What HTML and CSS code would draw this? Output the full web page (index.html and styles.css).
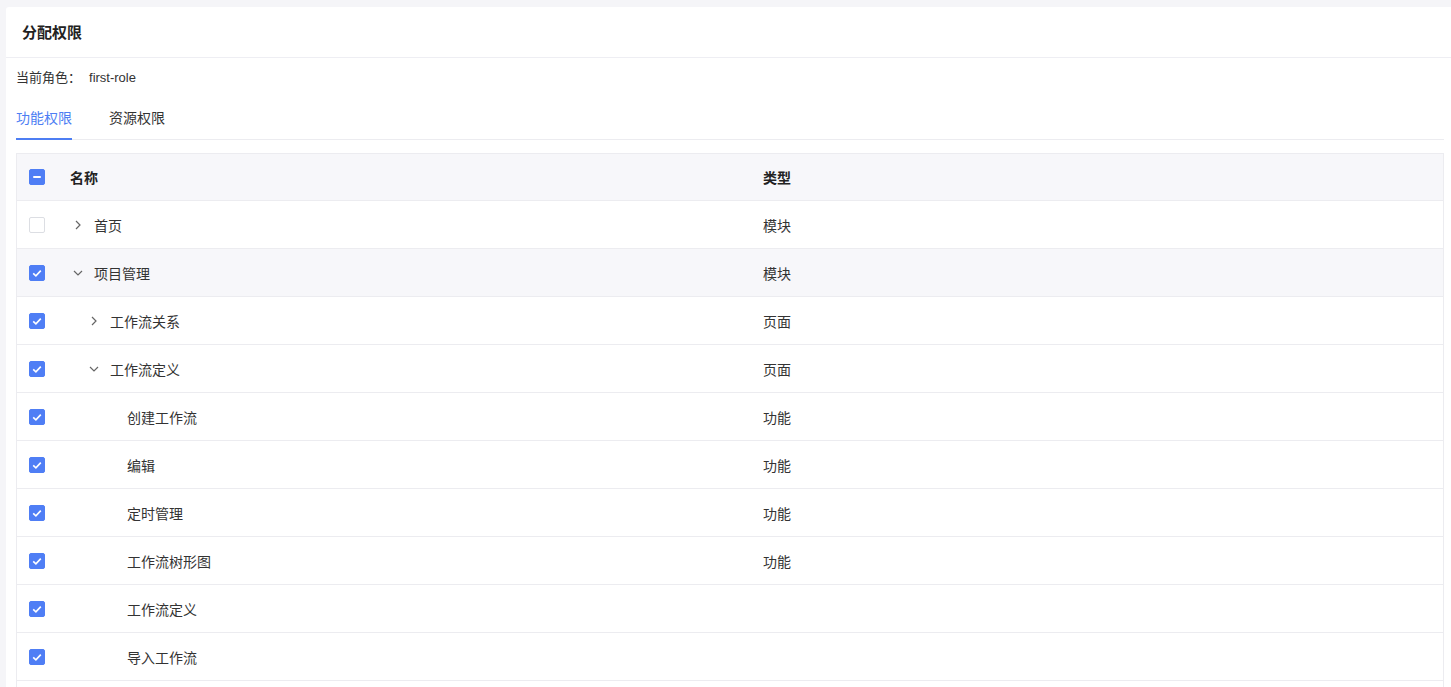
FILE: index.html
```html
<!DOCTYPE html>
<html lang="zh">
<head>
<meta charset="utf-8">
<title>分配权限</title>
<link rel="stylesheet" href="styles.css">
</head>
<body>
<div class="page">
  <div class="card">
    <div class="card-header">分配权限</div>
    <div class="card-body">
      <div class="role-line">当前角色：<span class="role-name">first-role</span></div>
      <div class="tabs">
        <div class="tab active">功能权限</div>
        <div class="tab">资源权限</div>
      </div>
      <div class="table">
        <div class="row head">
          <div class="cell-check"><span class="cb indeterminate"></span></div>
          <div class="cell-name">名称</div>
          <div class="cell-type">类型</div>
        </div>
        <div class="row">
          <div class="cell-check"><span class="cb"></span></div>
          <div class="cell-name lvl0"><span class="toggle"><svg viewBox="0 0 14 14" width="14" height="14"><path d="M5 3 L9 7 L5 11" fill="none" stroke="#666" stroke-width="1.2"/></svg></span>首页</div>
          <div class="cell-type">模块</div>
        </div>
        <div class="row hover">
          <div class="cell-check"><span class="cb checked"><svg viewBox="0 0 16 16" width="16" height="16"><path d="M4.2 8.3 L6.9 10.8 L11.8 5.6" fill="none" stroke="#fff" stroke-width="1.6"/></svg></span></div>
          <div class="cell-name lvl0"><span class="toggle"><svg viewBox="0 0 14 14" width="14" height="14"><path d="M3 5 L7 9 L11 5" fill="none" stroke="#666" stroke-width="1.2"/></svg></span>项目管理</div>
          <div class="cell-type">模块</div>
        </div>
        <div class="row">
          <div class="cell-check"><span class="cb checked"><svg viewBox="0 0 16 16" width="16" height="16"><path d="M4.2 8.3 L6.9 10.8 L11.8 5.6" fill="none" stroke="#fff" stroke-width="1.6"/></svg></span></div>
          <div class="cell-name lvl1"><span class="toggle"><svg viewBox="0 0 14 14" width="14" height="14"><path d="M5 3 L9 7 L5 11" fill="none" stroke="#666" stroke-width="1.2"/></svg></span>工作流关系</div>
          <div class="cell-type">页面</div>
        </div>
        <div class="row">
          <div class="cell-check"><span class="cb checked"><svg viewBox="0 0 16 16" width="16" height="16"><path d="M4.2 8.3 L6.9 10.8 L11.8 5.6" fill="none" stroke="#fff" stroke-width="1.6"/></svg></span></div>
          <div class="cell-name lvl1"><span class="toggle"><svg viewBox="0 0 14 14" width="14" height="14"><path d="M3 5 L7 9 L11 5" fill="none" stroke="#666" stroke-width="1.2"/></svg></span>工作流定义</div>
          <div class="cell-type">页面</div>
        </div>
        <div class="row">
          <div class="cell-check"><span class="cb checked"><svg viewBox="0 0 16 16" width="16" height="16"><path d="M4.2 8.3 L6.9 10.8 L11.8 5.6" fill="none" stroke="#fff" stroke-width="1.6"/></svg></span></div>
          <div class="cell-name lvl2"><span class="toggle"></span>创建工作流</div>
          <div class="cell-type">功能</div>
        </div>
        <div class="row">
          <div class="cell-check"><span class="cb checked"><svg viewBox="0 0 16 16" width="16" height="16"><path d="M4.2 8.3 L6.9 10.8 L11.8 5.6" fill="none" stroke="#fff" stroke-width="1.6"/></svg></span></div>
          <div class="cell-name lvl2"><span class="toggle"></span>编辑</div>
          <div class="cell-type">功能</div>
        </div>
        <div class="row">
          <div class="cell-check"><span class="cb checked"><svg viewBox="0 0 16 16" width="16" height="16"><path d="M4.2 8.3 L6.9 10.8 L11.8 5.6" fill="none" stroke="#fff" stroke-width="1.6"/></svg></span></div>
          <div class="cell-name lvl2"><span class="toggle"></span>定时管理</div>
          <div class="cell-type">功能</div>
        </div>
        <div class="row">
          <div class="cell-check"><span class="cb checked"><svg viewBox="0 0 16 16" width="16" height="16"><path d="M4.2 8.3 L6.9 10.8 L11.8 5.6" fill="none" stroke="#fff" stroke-width="1.6"/></svg></span></div>
          <div class="cell-name lvl2"><span class="toggle"></span>工作流树形图</div>
          <div class="cell-type">功能</div>
        </div>
        <div class="row">
          <div class="cell-check"><span class="cb checked"><svg viewBox="0 0 16 16" width="16" height="16"><path d="M4.2 8.3 L6.9 10.8 L11.8 5.6" fill="none" stroke="#fff" stroke-width="1.6"/></svg></span></div>
          <div class="cell-name lvl2"><span class="toggle"></span>工作流定义</div>
          <div class="cell-type"></div>
        </div>
        <div class="row">
          <div class="cell-check"><span class="cb checked"><svg viewBox="0 0 16 16" width="16" height="16"><path d="M4.2 8.3 L6.9 10.8 L11.8 5.6" fill="none" stroke="#fff" stroke-width="1.6"/></svg></span></div>
          <div class="cell-name lvl2"><span class="toggle"></span>导入工作流</div>
          <div class="cell-type"></div>
        </div>
      </div>
    </div>
  </div>
</div>
</body>
</html>
```

FILE: styles.css
```css
* { box-sizing: border-box; }
html, body {
  margin: 0;
  padding: 0;
  background: #f5f5f8;
  font-family: "Liberation Sans", "Noto Sans CJK SC", sans-serif;
  color: #333;
  overflow: hidden;
}
.page {
  padding: 7px 0 0 6px;
}
.card {
  background: #fff;
  border-radius: 3px 0 0 0;
  min-height: 700px;
}
.card-header {
  height: 51px;
  padding-left: 16px;
  padding-bottom: 2px;
  display: flex;
  align-items: center;
  font-size: 15px;
  font-weight: 700;
  color: #222;
  border-bottom: 1px solid #eeeef3;
}
.card-body {
  padding: 9px 1px 0 10px;
}
.role-line {
  font-size: 13px;
  line-height: 21px;
  color: #333;
}
.role-name {
  margin-left: 8px;
}
.tabs {
  display: flex;
  gap: 37px;
  border-bottom: 1px solid #ececf0;
  margin-right: 6px;
}
.tab {
  font-size: 14px;
  line-height: 22px;
  padding: 19px 0 9px;
  color: #333;
  border-bottom: 2px solid transparent;
  margin-bottom: -1px;
}
.tab.active {
  color: #4d7ef3;
  border-bottom-color: #4d7ef3;
}
.table {
  margin-top: 13px;
  border: 1px solid #ececf0;
  border-bottom: none;
  width: 1428px;
  min-height: 560px;
}
.row {
  display: flex;
  align-items: center;
  height: 48px;
  border-bottom: 1px solid #ececf0;
  font-size: 14px;
  color: #333;
}
.row.head {
  background: #f7f7fa;
  font-weight: 700;
  color: #222;
  height: 47px;
}
.row.hover {
  background: #f7f7fa;
}
.cell-check {
  width: 53px;
  padding-left: 12px;
  display: flex;
  align-items: center;
}
.cell-name {
  width: 693px;
  display: flex;
  align-items: center;
}
.cell-type {
  flex: 1;
}
.lvl1 { padding-left: 16px; }
.lvl2 { padding-left: 33px; }
.toggle {
  width: 24px;
  height: 16px;
  display: inline-flex;
  align-items: center;
  padding-left: 1px;
}
.cb {
  width: 16px;
  height: 16px;
  border-radius: 2px;
  border: 1px solid #dcdee3;
  background: #fff;
  display: inline-flex;
  align-items: center;
  justify-content: center;
}
.cb.checked {
  background: #4f7ef5;
  border-color: #4f7ef5;
}
.cb.checked svg {
  display: block;
  margin: -1px;
}
.cb.indeterminate {
  background: #4f7ef5;
  border-color: #4f7ef5;
}
.cb.indeterminate::after {
  content: "";
  width: 8px;
  height: 2px;
  background: #fff;
  border-radius: 1px;
}
```
